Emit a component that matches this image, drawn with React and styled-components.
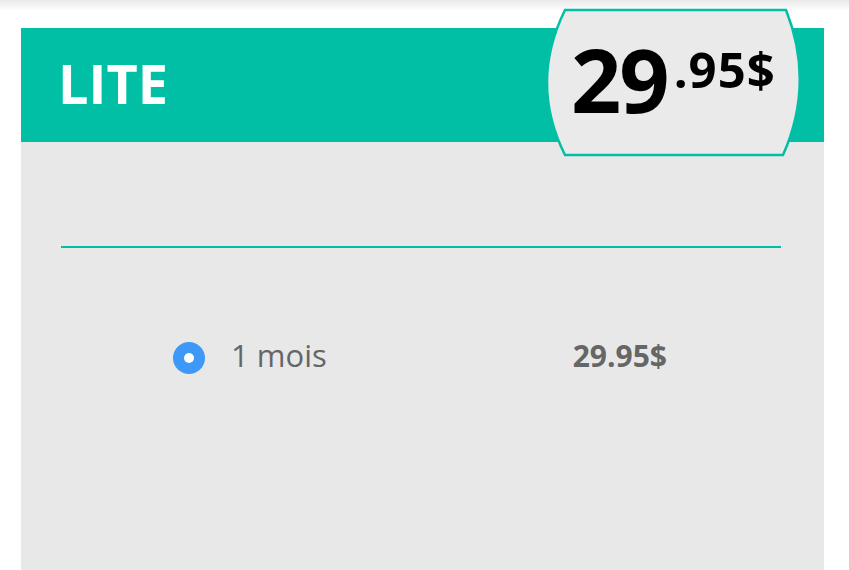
import React from 'react';
import styled, { createGlobalStyle } from 'styled-components';

const teal = '#00bfa5';

const GlobalStyle = createGlobalStyle`
  html, body {
    margin: 0;
    padding: 0;
    height: 100%;
    overflow: hidden;
    font-family: "Open Sans", "Liberation Sans", sans-serif;
    background: linear-gradient(to bottom, #e9e9e9 0, #ffffff 11px) no-repeat #fff;
  }
`;

const Page = styled.div`
  padding: 28px 0 0 21px;
`;

const Card = styled.div`
  width: 803px;
`;

const Header = styled.div`
  position: relative;
  height: 114px;
  background: ${teal};
  display: flex;
  align-items: center;
  padding: 0 0 5px 37px;
  box-sizing: border-box;
`;

const Title = styled.h1`
  margin: 0;
  font-size: 54px;
  line-height: 1;
  font-weight: 700;
  color: #fff;
`;

const Badge = styled.div`
  position: absolute;
  left: 525px;
  top: -20px;
  width: 256px;
  height: 150px;
  display: flex;
  align-items: flex-start;
  padding: 27px 0 0 25px;
  box-sizing: border-box;
`;

const BadgeShape = styled.svg`
  position: absolute;
  left: 0;
  top: 0;
  overflow: visible;
`;

const Amount = styled.span`
  position: relative;
  font-size: 88px;
  line-height: 1;
  font-weight: 700;
  color: #000;
  letter-spacing: -2px;
`;

const Cents = styled.span`
  position: relative;
  margin: 10px 0 0 6px;
  font-size: 49px;
  line-height: 1;
  font-weight: 700;
  letter-spacing: 1px;
  color: #000;
`;

const Body = styled.div`
  background: #e8e8e8;
  height: 430px;
  padding-top: 104px;
  box-sizing: border-box;
`;

const Rule = styled.div`
  height: 2px;
  margin: 0 43px 0 40px;
  background: ${teal};
`;

const Option = styled.label`
  display: flex;
  align-items: center;
  justify-content: space-between;
  width: 494px;
  margin: 94px 0 0 152px;
  color: #666;
`;

const Choice = styled.span`
  display: flex;
  align-items: center;
  gap: 26px;
`;

const Radio = styled.span`
  width: 32px;
  height: 32px;
  border-radius: 50%;
  background: #3d99f5;
  display: flex;
  align-items: center;
  justify-content: center;
  &::after {
    content: "";
    width: 10px;
    height: 10px;
    border-radius: 50%;
    background: #fff;
  }
`;

const Label = styled.span`
  font-size: 31px;
  line-height: 1;
  margin-top: -6px;
`;

const Price = styled.span`
  font-size: 30px;
  font-weight: 700;
  line-height: 1;
  margin-top: -4px;
`;

export default function App() {
  return (
    <>
      <GlobalStyle />
      <Page>
        <Card>
          <Header>
            <Title>LITE</Title>
            <Badge>
              <BadgeShape width="256" height="150" viewBox="0 0 256 150">
                <path
                  d="M19 2 H240 Q269 75 237 147 H19 Q-17 75 19 2 Z"
                  fill="#eaeaea"
                  stroke={teal}
                  strokeWidth="2.5"
                />
              </BadgeShape>
              <Amount>29</Amount>
              <Cents>.95$</Cents>
            </Badge>
          </Header>
          <Body>
            <Rule />
            <Option>
              <Choice>
                <Radio />
                <Label>1 mois</Label>
              </Choice>
              <Price>29.95$</Price>
            </Option>
          </Body>
        </Card>
      </Page>
    </>
  );
}
